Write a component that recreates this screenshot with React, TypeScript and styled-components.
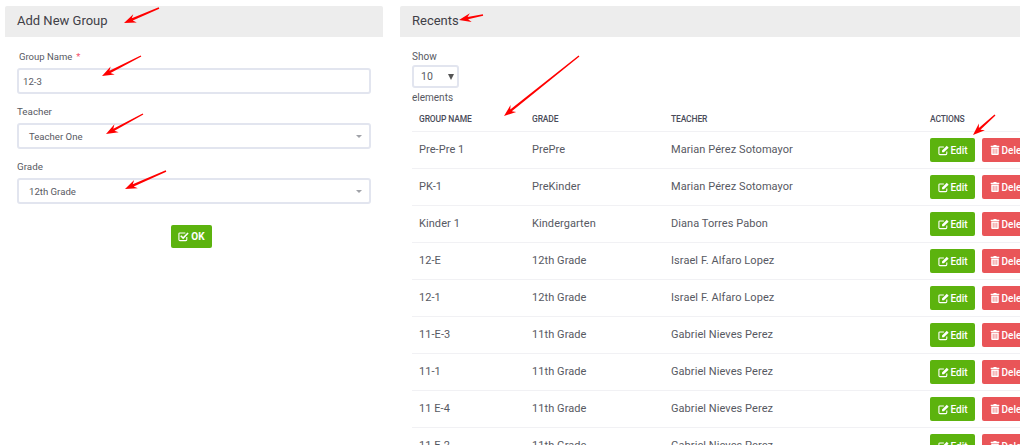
import styled, { createGlobalStyle } from "styled-components"
import { FaTrashAlt } from "react-icons/fa"

const GlobalStyle = createGlobalStyle`
  html, body {
    margin: 0;
    padding: 0;
    background: #fff;
    overflow: hidden;
    font-family: Roboto, "Liberation Sans", sans-serif;
    color: #575962;
  }
`

const Page = styled.div`
  position: relative;
  width: 1020px;
  height: 445px;
  overflow: hidden;
  display: flex;
  align-items: flex-start;
  gap: 17px;
  padding: 6px 0 0 5px;
  box-sizing: border-box;
`

const LeftPanel = styled.section`
  flex: 0 0 378px;
`

const RightPanel = styled.section`
  flex: 0 0 700px;
`

const PanelHeader = styled.h3`
  margin: 0;
  height: 31px;
  line-height: 29px;
  padding-left: 12px;
  background: #ededed;
  border-radius: 2px 2px 0 0;
  font-size: 13px;
  font-weight: 400;
  color: #3f4047;
`

const Form = styled.form`
  display: flex;
  flex-direction: column;
  padding: 12px 12px 0;
`

const Field = styled.div`
  display: flex;
  flex-direction: column;
  margin-bottom: 10px;
`

const Label = styled.label<{ $indent?: boolean }>`
  font-size: ${(p) => (p.$indent ? "9.5px" : "9.8px")};
  line-height: 14px;
  margin-bottom: 4px;
  padding-top: 1px;
  padding-left: ${(p) => (p.$indent ? "2px" : "0")};
  color: #575962;
`

const Required = styled.span`
  color: #f4516c;
  margin-left: 4px;
`

const Control = styled.div<{ $pad: number }>`
  height: 26px;
  box-sizing: border-box;
  border: 2px solid #e2e5ef;
  border-radius: 3px;
  display: flex;
  align-items: center;
  justify-content: space-between;
  padding: 0 7px 0 ${(p) => p.$pad}px;
  font-size: 9.6px;
  color: #575962;
`

const Caret = styled.span`
  width: 0;
  height: 0;
  border-left: 3px solid transparent;
  border-right: 3px solid transparent;
  border-top: 3px solid #a0a2a8;
`

const FormActions = styled.div`
  display: flex;
  justify-content: center;
  padding: 11px 5px 0 0;
`

const Button = styled.button<{ $variant: "edit" | "delete" }>`
  display: inline-flex;
  align-items: center;
  justify-content: center;
  gap: 2px;
  height: 24px;
  border: none;
  border-radius: 2px;
  padding: 0 7.5px;
  font-family: inherit;
  font-size: 10px;
  font-weight: 500;
  color: #fff;
  white-space: nowrap;
  background: ${(p) => (p.$variant === "edit" ? "#5cb30e" : "#e95558")};

  svg {
    font-size: 10px;
  }
`

const OkButton = styled(Button)`
  height: 23px;
  padding: 0 7px;
  font-weight: 700;
`

const ShowBlock = styled.div`
  display: flex;
  flex-direction: column;
  align-items: flex-start;
  padding: 13px 12px 0;
  font-size: 10px;
  line-height: 14px;
  color: #575962;
`

const LengthSelect = styled.div`
  width: 47px;
  height: 23px;
  margin: 1px 0 3px;
  box-sizing: border-box;
  border: 2px solid #e2e5ef;
  border-radius: 3px;
  display: flex;
  align-items: center;
  justify-content: space-between;
  padding: 0 3px 0 7px;
  font-size: 10.5px;
`

const LengthCaret = styled.span`
  width: 0;
  height: 0;
  border-left: 3px solid transparent;
  border-right: 3px solid transparent;
  border-top: 6px solid #555;
`

const Table = styled.table`
  margin: 2px 0 0 12px;
  width: 660px;
  table-layout: fixed;
  border-collapse: collapse;
`

const HeadCell = styled.th<{ $width?: number }>`
  width: ${(p) => (p.$width ? `${p.$width}px` : "auto")};
  height: 24px;
  padding: 0 7px;
  text-align: left;
  font-size: 8.5px;
  letter-spacing: -0.15px;
  font-weight: 500;
  color: #4a4c5a;
  border-bottom: 1px solid #f1f1f4;
`

const Row = styled.tr`
  border-bottom: 1px solid #f1f1f4;
`

const Cell = styled.td`
  height: 34px;
  padding: 0 7px 2px;
  font-size: 11px;
  letter-spacing: 0.07px;
  color: #575962;
`

const ActionCell = styled.td`
  height: 36px;
  padding: 0 7px;
`

const Actions = styled.div`
  display: flex;
  gap: 7px;
`

const Arrows = styled.svg`
  position: absolute;
  left: 0;
  top: 0;
  pointer-events: none;
`

const rows = [
  ["Pre-Pre 1", "PrePre", "Marian Pérez Sotomayor"],
  ["PK-1", "PreKinder", "Marian Pérez Sotomayor"],
  ["Kinder 1", "Kindergarten", "Diana Torres Pabon"],
  ["12-E", "12th Grade", "Israel F. Alfaro Lopez"],
  ["12-1", "12th Grade", "Israel F. Alfaro Lopez"],
  ["11-E-3", "11th Grade", "Gabriel Nieves Perez"],
  ["11-1", "11th Grade", "Gabriel Nieves Perez"],
  ["11 E-4", "11th Grade", "Gabriel Nieves Perez"],
  ["11 E-2", "11th Grade", "Gabriel Nieves Perez"],
]

// tail x, tail y, tip x, tip y
const arrows = [
  [159, 8, 124, 23],
  [141, 56, 102, 76],
  [143, 114, 106, 134],
  [166, 171, 125, 189],
  [483, 15, 459, 20],
  [579, 56, 504, 116],
  [995, 115, 973, 135],
]

function arrowShape(x1: number, y1: number, x2: number, y2: number) {
  const len = Math.hypot(x2 - x1, y2 - y1)
  const ux = (x2 - x1) / len
  const uy = (y2 - y1) / len
  const at = (back: number, side: number) =>
    `${x2 - ux * back - uy * side},${y2 - uy * back + ux * side}`
  return [
    at(len, 0.7),
    at(9, 1.2),
    at(12, 4.5),
    `${x2},${y2}`,
    at(12, -4.5),
    at(9, -1.2),
    at(len, -0.7),
  ].join(" ")
}

// font-awesome 4 style outline icons, not in the fa5 set
function EditIcon() {
  return (
    <svg width="11" height="11" viewBox="0 0 12 12" fill="none">
      <path
        d="M9.6 7v2.4a1.1 1.1 0 0 1-1.1 1.1H2.1A1.1 1.1 0 0 1 1 9.4V3.2a1.1 1.1 0 0 1 1.1-1.1H6.4"
        stroke="currentColor"
        strokeWidth="1.2"
      />
      <path d="M4.4 6 9.6 .9 11.6 2.9 6.4 8H4.4Z" fill="currentColor" />
    </svg>
  )
}

function CheckIcon() {
  return (
    <svg width="11" height="11" viewBox="0 0 12 12" fill="none">
      <path
        d="M9.6 6.6v2.8a1.1 1.1 0 0 1-1.1 1.1H2.1A1.1 1.1 0 0 1 1 9.4V3.2a1.1 1.1 0 0 1 1.1-1.1H8"
        stroke="currentColor"
        strokeWidth="1.2"
      />
      <path d="M3 5.2 5.6 7.8 11 2.2" stroke="currentColor" strokeWidth="1.7" />
    </svg>
  )
}

function App() {
  return (
    <Page>
      <GlobalStyle />
      <LeftPanel>
        <PanelHeader>Add New Group</PanelHeader>
        <Form>
          <Field>
            <Label $indent>
              Group Name<Required>*</Required>
            </Label>
            <Control $pad={4}>12-3</Control>
          </Field>
          <Field>
            <Label>Teacher</Label>
            <Control $pad={10}>
              Teacher One
              <Caret />
            </Control>
          </Field>
          <Field>
            <Label>Grade</Label>
            <Control $pad={10}>
              12th Grade
              <Caret />
            </Control>
          </Field>
          <FormActions>
            <OkButton $variant="edit" type="button">
              <CheckIcon />
              OK
            </OkButton>
          </FormActions>
        </Form>
      </LeftPanel>
      <RightPanel>
        <PanelHeader>Recents</PanelHeader>
        <ShowBlock>
          Show
          <LengthSelect>
            10
            <LengthCaret />
          </LengthSelect>
          elements
        </ShowBlock>
        <Table>
          <thead>
            <tr>
              <HeadCell $width={99}>GROUP NAME</HeadCell>
              <HeadCell $width={125}>GRADE</HeadCell>
              <HeadCell $width={245}>TEACHER</HeadCell>
              <HeadCell>ACTIONS</HeadCell>
            </tr>
          </thead>
          <tbody>
            {rows.map((row, i) => (
              <Row key={i}>
                <Cell>{row[0]}</Cell>
                <Cell>{row[1]}</Cell>
                <Cell>{row[2]}</Cell>
                <ActionCell>
                  <Actions>
                    <Button $variant="edit" type="button">
                      <EditIcon />
                      Edit
                    </Button>
                    <Button $variant="delete" type="button">
                      <FaTrashAlt />
                      Delete
                    </Button>
                  </Actions>
                </ActionCell>
              </Row>
            ))}
          </tbody>
        </Table>
      </RightPanel>
      <Arrows width="1020" height="445">
        {arrows.map(([x1, y1, x2, y2], i) => (
          <polygon key={i} points={arrowShape(x1, y1, x2, y2)} fill="#f00" />
        ))}
      </Arrows>
    </Page>
  )
}

export default App
